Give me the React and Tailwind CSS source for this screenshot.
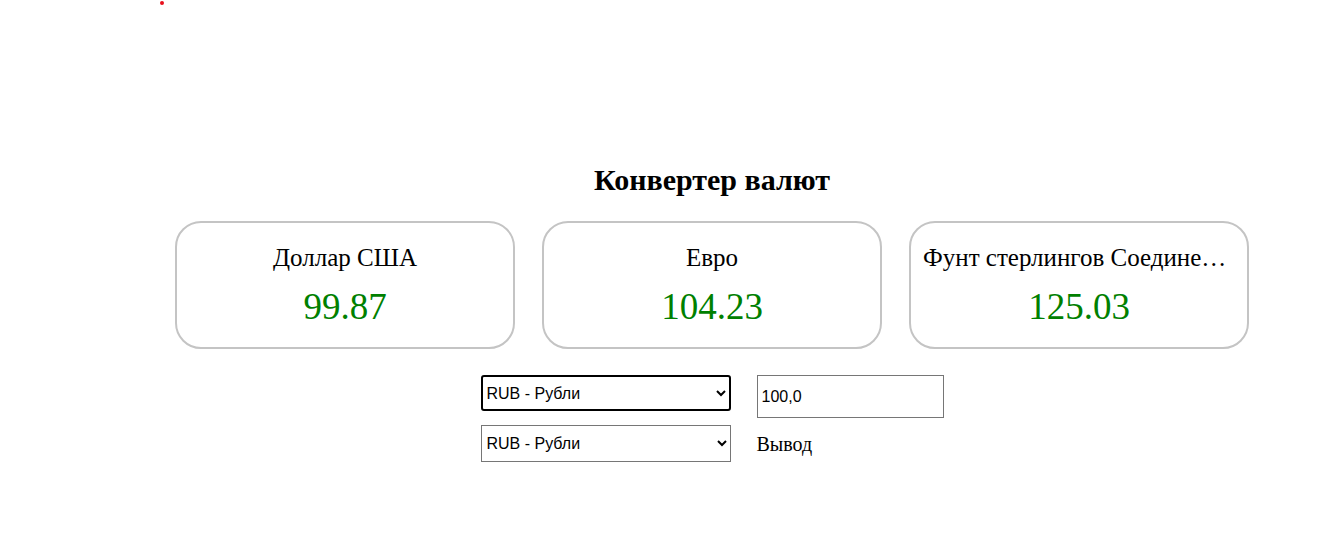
const rates = [
  { name: 'Доллар США', value: '99.87' },
  { name: 'Евро', value: '104.23' },
  { name: 'Фунт стерлингов Соединенного королевства', value: '125.03' },
]

function RateCard({ name, value }) {
  return (
    <div className="w-[340px] h-[128px] border-2 border-[#c4c4c4] rounded-[26px] px-3 flex flex-col items-center justify-center">
      <div className="w-full text-center text-[25px] leading-[30px] truncate">{name}</div>
      <div className="mt-[13px] text-[37px] leading-[42px] text-[#008000]">{value}</div>
    </div>
  )
}

export default function App() {
  return (
    <div className="min-h-[555px] bg-white text-black font-['Liberation_Serif',serif] relative">
      <span className="absolute left-[160px] top-[1px] w-[4px] h-[4px] rounded-full bg-[#e8101c]" />
      <div className="pl-[97px] pt-[160px] flex flex-col items-center">
        <h1 className="text-[30px] leading-[40px] font-bold">Конвертер валют</h1>
        <div className="mt-[21px] flex gap-[27px]">
          {rates.map(r => (
            <RateCard key={r.name} name={r.name} value={r.value} />
          ))}
        </div>
        <div className="mt-[26px] grid grid-cols-[250px_187px] gap-x-[26px] gap-y-[7px] font-['Liberation_Sans',sans-serif]">
          <select className="h-[36px] border-2 border-black rounded-[3px] px-0 text-[16px]" defaultValue="RUB">
            <option value="RUB">RUB - Рубли</option>
          </select>
          <input className="h-[43px] border border-[#767676] px-[4px] text-[16px]" defaultValue="100,0" />
          <select className="h-[37px] border border-[#767676] px-[1px] text-[16px]" defaultValue="RUB">
            <option value="RUB">RUB - Рубли</option>
          </select>
          <div className="self-start pt-[4px] font-['Liberation_Serif',serif] text-[20px]">Вывод</div>
        </div>
      </div>
    </div>
  )
}
